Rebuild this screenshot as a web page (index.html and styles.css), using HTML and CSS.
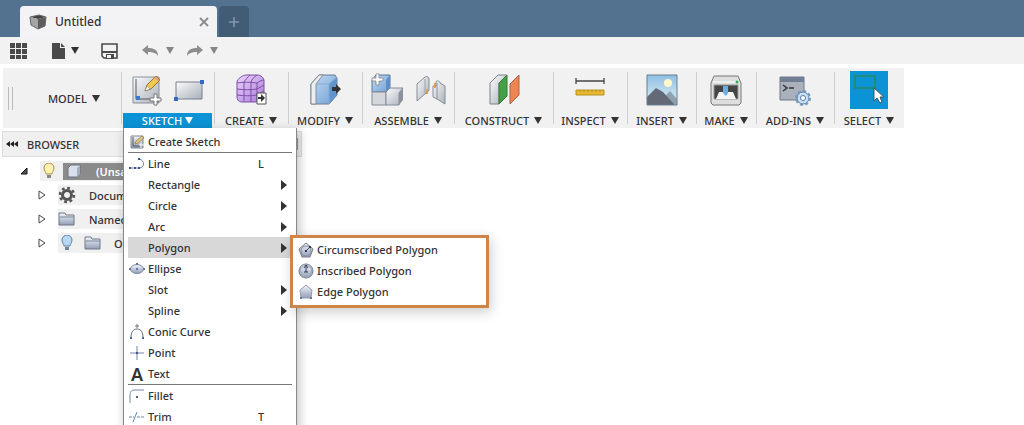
FILE: index.html
```html
<!DOCTYPE html>
<html lang="en">
<head>
  <meta charset="UTF-8" />
  <meta name="viewport" content="width=device-width, initial-scale=1" />
  <title>Untitled</title>
  <link rel="stylesheet" href="styles.css">
</head>
<body>
  <!-- shared gradients -->
  <svg class="defs" width="0" height="0" aria-hidden="true">
    <defs>
      <linearGradient id="silver" x1="0" y1="0" x2="1" y2="1"><stop offset="0" stop-color="#fafbfc"/><stop offset="1" stop-color="#a9b0ba"/></linearGradient>
      <linearGradient id="steel" x1="0" y1="0" x2="0" y2="1"><stop offset="0" stop-color="#f3f6fb"/><stop offset="1" stop-color="#929eb7"/></linearGradient>
      <linearGradient id="blue" x1="0" y1="0" x2="1" y2="1"><stop offset="0" stop-color="#c3dcf5"/><stop offset="1" stop-color="#6f9fd4"/></linearGradient>
      <linearGradient id="violet" x1="0" y1="0" x2="1" y2="1"><stop offset="0" stop-color="#ecd6fd"/><stop offset="1" stop-color="#a878d8"/></linearGradient>
      <linearGradient id="sky" x1="0" y1="0" x2="0" y2="1"><stop offset="0" stop-color="#8fc0e3"/><stop offset="1" stop-color="#e3f1f5"/></linearGradient>
    </defs>
  </svg>

  <div class="app">
    <header class="tabs">
      <div class="tab">
        <svg width="18" height="16" viewBox="0 0 18 16"><path d="M1 3l9-2 7 2-8 2z" fill="#444"/><path d="M1 3l8 2v10l-7-4z" fill="#a5a5a5"/><path d="M9 5l8-2-1 9-7 3z" fill="#5c5c5c"/><path d="M1 3l9-2 7 2-1 9-7 3-7-4z" fill="none" stroke="#666"/></svg>
        <span class="tab-title">Untitled</span>
        <button class="tab-close" aria-label="Close"><svg width="10" height="10" viewBox="0 0 10 10"><path d="M1 1l8 8M9 1L1 9" stroke="#8b8b8b" stroke-width="1.8"/></svg></button>
      </div>
      <button class="tab-new" aria-label="New tab"><svg width="12" height="12" viewBox="0 0 12 12"><path d="M6 1v10M1 6h10" stroke="#8496a8" stroke-width="1.6"/></svg></button>
    </header>

    <nav class="quickbar">
      <button class="quick-grid" aria-label="Data panel"><svg width="18" height="18" viewBox="0 0 18 18" fill="#4a4a4a"><path d="M0 1h5v5H0zM6 1h5v5H6zM12 1h5v5h-5zM0 7h5v5H0zM6 7h5v5H6zM12 7h5v5h-5zM0 13h5v4H0zM6 13h5v4H6zM12 13h5v4h-5z"/></svg></button>
      <button class="quick-file" aria-label="File"><svg width="14" height="16" viewBox="0 0 14 16"><path d="M0 0h8v5h5v11H0z" fill="#4a4a4a"/><path d="M9 0l4 4H9z" fill="#4a4a4a"/></svg><i class="arrow"></i></button>
      <button class="quick-save" aria-label="Save"><svg width="17" height="16" viewBox="0 0 17 16"><path d="M1 1h15v14H3l-2-2z" fill="#f2f2f2" stroke="#4a4a4a" stroke-width="1.6"/><path d="M1 8h15v2H1zM5 11h8v5H5z" fill="#4a4a4a"/><path d="M6 12h4v3H6z" fill="#f2f2f2"/></svg></button>
      <button class="quick-undo" aria-label="Undo"><svg width="17" height="12" viewBox="0 0 17 12"><path d="M0 5l6-5v3c6 0 10 2 10 8-2-3-5-4-10-4v3z" fill="#8d8d8d"/></svg><i class="arrow dim"></i></button>
      <button class="quick-redo" aria-label="Redo"><svg width="17" height="12" viewBox="0 0 17 12"><path d="M17 5l-6-5v3C5 3 1 5 1 11c2-3 5-4 10-4v3z" fill="#8d8d8d"/></svg><i class="arrow dim"></i></button>
    </nav>

    <div class="toolbar">
      <div class="workspace">
        <span class="grip"></span>
        <button>MODEL<i class="arrow"></i></button>
      </div>

      <div class="group sketch">
        <div class="icons">
          <svg width="32" height="32" viewBox="0 0 32 32"><path d="M3 3h26v26H3z" fill="url(#silver)" stroke="#888f99"/><path d="M6 5v20h21" fill="none" stroke="#555" /><path d="M6 22h4v4H6z" fill="#3b78c8"/><path d="M15 17l2-6 9-9 4 4-9 9z" fill="#f1c84c" stroke="#987228"/><path d="M15 17l2-5 3 3z" fill="#fff" stroke="#777" stroke-width=".5"/><path d="M25 3l4 4" stroke="#e49a86" stroke-width="2"/><path d="M24 20h3v4h4v3h-4v4h-3v-4h-4v-3h4z" fill="#fff" stroke="#777"/></svg>
          <svg width="32" height="26" viewBox="0 0 32 26"><path d="M3 5h26v17H3z" fill="url(#silver)" stroke="#777f8d"/><path d="M27 3h4v4h-4zM1 20h4v4H1z" fill="#3469bd"/></svg>
        </div>
        <button class="label open" aria-expanded="true">SKETCH<i class="arrow"></i></button>

        <ul class="menu">
          <li><button><span class="mi"><svg width="15" height="14" viewBox="0 0 15 14"><path d="M1 1h12v12H1z" fill="url(#steel)" stroke="#7e8697"/><path d="M3 2v9h9" fill="none" stroke="#555"/><path d="M5 9l1-3 6-5 2 2-6 5z" fill="#e2c680" stroke="#8c7a51" stroke-width=".7"/><path d="M11 8v5M9 10h5" stroke="#fff"/></svg></span>Create Sketch</button></li>
          <li class="sep"></li>
          <li><button><span class="mi"><svg width="16" height="14" viewBox="0 0 16 14"><path d="M1 11h9c6 0 6-8 0-9" fill="none" stroke="#6c80aa"/><path d="M0 10h2v2H0zM5 10h2v2H5zM9 10h2v2H9zM9 1h2v2H9z" fill="#3f5791"/></svg></span>Line<kbd>L</kbd></button></li>
          <li><button><span class="mi"></span>Rectangle<i class="sub"></i></button></li>
          <li><button><span class="mi"></span>Circle<i class="sub"></i></button></li>
          <li><button><span class="mi"></span>Arc<i class="sub"></i></button></li>
          <li class="has-sub">
            <button class="active" aria-expanded="true"><span class="mi"></span>Polygon<i class="sub"></i></button>
            <ul class="submenu">
              <li><button><span class="mi"><svg width="16" height="16" viewBox="0 0 16 16"><path d="M8 1l7 6-3 8H4L1 7z" fill="url(#steel)" stroke="#777b88"/><circle cx="8" cy="9" r="5" fill="none" stroke="#868c9b"/><path d="M8 9l3-3" stroke="#555"/><path d="M7 8h2v2H7zM11 4h2v2h-2z" fill="#333c55"/></svg></span>Circumscribed Polygon</button></li>
              <li><button><span class="mi"><svg width="16" height="16" viewBox="0 0 16 16"><circle cx="8" cy="8" r="7" fill="url(#steel)" stroke="#6e7484"/><path d="M8 1l6 5-2 8H4L2 6z" fill="none" stroke="#9ba2b3"/><path d="M8 2v7M6 9h4M8 2L6 5M8 2l2 3" stroke="#333c55" fill="none"/></svg></span>Inscribed Polygon</button></li>
              <li><button><span class="mi"><svg width="16" height="16" viewBox="0 0 16 16"><path d="M8 1l6 5-1 8H3L2 6z" fill="url(#steel)" stroke="#989ca8"/><path d="M2 13h2v2H2zM12 13h2v2h-2z" fill="#6274a3"/></svg></span>Edge Polygon</button></li>
            </ul>
          </li>
          <li><button><span class="mi"><svg width="16" height="12" viewBox="0 0 16 12"><ellipse cx="8" cy="6" rx="6.5" ry="4.5" fill="url(#steel)" stroke="#7d8aa6"/><path d="M7 5h2v2H7zM0 5h2v2H0zM14 5h2v2h-2zM7 0h2v2H7z" fill="#6478a2"/></svg></span>Ellipse</button></li>
          <li><button><span class="mi"></span>Slot<i class="sub"></i></button></li>
          <li><button><span class="mi"></span>Spline<i class="sub"></i></button></li>
          <li><button><span class="mi"><svg width="16" height="16" viewBox="0 0 16 16"><path d="M2 14C2 8 4 5 8 5s6 3 6 9" fill="none" stroke="#666e7c"/><path d="M8 0v4M6 2h4" stroke="#777"/><path d="M1 13h2v2H1zM13 13h2v2h-2z" fill="#4867a3"/></svg></span>Conic Curve</button></li>
          <li><button><span class="mi"><svg width="16" height="16" viewBox="0 0 16 16"><path d="M8 1v14M1 8h14" stroke="#7184a8"/><path d="M7 7h2v2H7z" fill="#3f5685"/></svg></span>Point</button></li>
          <li><button><span class="mi letter">A</span>Text</button></li>
          <li class="sep"></li>
          <li><button><span class="mi"><svg width="16" height="16" viewBox="0 0 16 16"><path d="M1 15V7c0-4 2-5 5-5h9" fill="none" stroke="#7186a9"/><path d="M7 8h2v2H7z" fill="#52658b"/></svg></span>Fillet</button></li>
          <li><button><span class="mi"><svg width="16" height="14" viewBox="0 0 16 14"><path d="M0 7h5M8 7h8" stroke="#71869f" stroke-dasharray="3 1"/><path d="M4 12L8 2" stroke="#5d86bb"/></svg></span>Trim<kbd>T</kbd></button></li>
        </ul>
      </div>

      <div class="group create">
        <div class="icons"><svg width="32" height="34" viewBox="0 0 32 34"><path d="M2 9c0-3 6-7 9-7h11c4 0 7 3 7 6v13c0 4-5 8-9 8H7c-4 0-5-3-5-6z" fill="url(#violet)" stroke="#7c4ca6"/><path d="M2 10c6-1 13-1 20 0 3-2 5-3 7-3M9 9v19M16 9v20M22 10v18M2 16c7 1 14 1 20 0l7-4M2 22c7 1 14 1 20 0l7-4M9 9c2-3 4-5 6-7M16 9c1-3 3-5 6-7" fill="none" stroke="#7d4ea8"/><path d="M22 20h9v11h-9z" fill="#fff" stroke="#555"/><path d="M23 24h3v-3l4 4-4 4v-3h-3z" fill="#333"/></svg></div>
        <button class="label">CREATE<i class="arrow"></i></button>
      </div>
      <div class="group modify">
        <div class="icons"><svg width="32" height="34" viewBox="0 0 32 34"><path d="M2 11l8-9h16l2 3v17l-8 9H2z" fill="url(#blue)" stroke="#687b91"/><path d="M2 11l8-9h4L7 11v20H2z" fill="#eceff2" stroke="#848b93"/><path d="M20 11l8-7v18l-8 9z" fill="#5f94cf"/><path d="M7 11h13v20M20 11l8-7" fill="none" stroke="#8baacc"/><path d="M23 14h4v-3l5 5-5 5v-3h-4z" fill="#333"/></svg></div>
        <button class="label">MODIFY<i class="arrow"></i></button>
      </div>
      <div class="group assemble">
        <div class="icons">
          <svg width="34" height="34" viewBox="0 0 34 34"><path d="M2 7l4-5h14v13l-4 4H2z" fill="url(#blue)" stroke="#59779b"/><path d="M16 7l4-5v13l-4 4z" fill="#5d8ec6"/><path d="M2 19h14v13H2z" fill="#d4d7dc" stroke="#858b94"/><path d="M16 19l4-4h13l-4 5v12H16z" fill="url(#silver)" stroke="#858b94"/><path d="M29 20l4-5v12l-4 5z" fill="#8c929b"/><path d="M6 1h3v4h4v3H9v4H6V8H2V5h4z" fill="#fff" stroke="#777" stroke-width=".7"/></svg>
          <svg width="32" height="30" viewBox="0 0 32 30"><path d="M2 9l8-7c2-1 4 0 4 2v11l-3 4v-1L2 26z" fill="url(#silver)" stroke="#858d96"/><path d="M10 4v14" stroke="#9ba2aa"/><path d="M18 11h3V7c1-2 4-1 4 1l5 3v18l-8-5-4-2z" fill="url(#silver)" stroke="#858d96"/><path d="M22 8v16" stroke="#8b929b"/><path d="M12 14v5M20 8v5" stroke="#e78b36" stroke-width="1.4"/></svg>
        </div>
        <button class="label">ASSEMBLE<i class="arrow"></i></button>
      </div>
      <div class="group construct">
        <div class="icons"><svg width="34" height="34" viewBox="0 0 34 34"><path d="M3 10l8-8h9l-8 8v21H3z" fill="url(#silver)" stroke="#7b8289"/><path d="M12 10l8-8v21l-8 8z" fill="#43a047" stroke="#377a3b"/><path d="M23 11l9-9v20l-9 9z" fill="#ef8450" stroke="#a76242"/></svg></div>
        <button class="label">CONSTRUCT<i class="arrow"></i></button>
      </div>
      <div class="group inspect">
        <div class="icons"><svg width="32" height="28" viewBox="0 0 32 28"><path d="M2 5h28M2 2v6M30 2v6" stroke="#444" stroke-width="1.3"/><path d="M2 14h28v5H2z" fill="#e7b931" stroke="#b98f25"/><path d="M6 14v2M10 14v2M14 14v2M18 14v2M22 14v2M26 14v2" stroke="#b98f25"/></svg></div>
        <button class="label">INSPECT<i class="arrow"></i></button>
      </div>
      <div class="group insert">
        <div class="icons"><svg width="32" height="32" viewBox="0 0 32 32"><path d="M1 1h30v30H1z" fill="url(#sky)"/><circle cx="22" cy="9" r="4" fill="#fff8c9"/><path d="M12 29l12-12 7 8v6H12z" fill="#8fa0b0"/><path d="M1 23l9-9 7 4 11 12v1H1z" fill="#646978"/><path d="M1 1h30v30H1z" fill="none" stroke="#697e8d"/></svg></div>
        <button class="label">INSERT<i class="arrow"></i></button>
      </div>
      <div class="group make">
        <div class="icons"><svg width="32" height="32" viewBox="0 0 32 32"><path d="M4 2h24l3 7v20l-2 2H3l-2-2V9z" fill="#dedede" stroke="#777"/><path d="M3 8h26" stroke="#fff"/><path d="M4 11h24v14H4z" fill="#454545" stroke="#999"/><path d="M9 18h14l3 7H6z" fill="#f2f4f5"/><path d="M13 12h5v7l-2 3-3-3z" fill="#6cacdf"/><circle cx="27" cy="8" r="1.5" fill="#34a853"/></svg></div>
        <button class="label">MAKE<i class="arrow"></i></button>
      </div>
      <div class="group addins">
        <div class="icons"><svg width="32" height="32" viewBox="0 0 32 32"><path d="M1 3h24v23H1z" fill="#aab0bc" stroke="#6f7888"/><path d="M1 3h24v5H1z" fill="#717d93"/><path d="M4 11l4 3-4 3M10 14h5" fill="none" stroke="#333" stroke-width="1.5"/><circle cx="24" cy="24" r="6" fill="#c9ddf0" stroke="#597da6"/><circle cx="24" cy="24" r="7" fill="none" stroke="#7599bf" stroke-width="2" stroke-dasharray="3 2.5"/><circle cx="24" cy="24" r="2.5" fill="#fff" stroke="#597da6"/></svg></div>
        <button class="label">ADD-INS<i class="arrow"></i></button>
      </div>
      <div class="group select">
        <div class="icons"><svg width="38" height="38" viewBox="0 0 38 38"><path d="M0 0h38v38H0z" fill="#0b93d5"/><path d="M5 5h20v12H5z" fill="none" stroke="#258b62" stroke-width="1.6"/><path d="M24 17v13l3-3 3 5 2-1-2-5h4z" fill="#fff" stroke="#3c5263"/></svg></div>
        <button class="label">SELECT<i class="arrow"></i></button>
      </div>
    </div>

    <aside class="browser">
      <h2><svg width="12" height="6" viewBox="0 0 12 6"><path d="M0 3l4-3v6zM4 3l4-3v6zM8 3l4-3v6z" fill="#222"/></svg>BROWSER<span class="browser-grip"></span></h2>
      <div class="node root">
        <svg class="twist" width="8" height="8" viewBox="0 0 8 8"><path d="M7 1v6H1z" fill="#555" stroke="#111"/></svg>
        <div class="node-body">
          <svg width="18" height="16" viewBox="0 0 18 16"><path d="M6 11c0-2-2-3-2-6a5 5 0 0 1 10 0c0 3-2 4-2 6z" fill="#fff1ae" stroke="#a88f50"/><path d="M7 12h4v3H7z" fill="#888"/></svg>
          <div class="root-name"><svg width="16" height="16" viewBox="0 0 16 16"><path d="M2 5l3-3h9v9l-3 3H2z" fill="#d9e0eb" stroke="#6c7480"/><path d="M11 5l3-3v9l-3 3z" fill="#a5afbf"/></svg>(Unsa</div>
        </div>
      </div>
      <div class="node">
        <svg class="twist" width="8" height="10" viewBox="0 0 8 10"><path d="M1 1l6 4-6 4z" fill="#fff" stroke="#444"/></svg>
        <div class="node-body"><svg width="18" height="18" viewBox="0 0 18 18"><circle cx="9" cy="9" r="4.5" fill="none" stroke="#555" stroke-width="3"/><circle cx="9" cy="9" r="7" fill="none" stroke="#555" stroke-width="2.5" stroke-dasharray="2.8 2.7"/></svg><span>Docum</span></div>
      </div>
      <div class="node">
        <svg class="twist" width="8" height="10" viewBox="0 0 8 10"><path d="M1 1l6 4-6 4z" fill="#fff" stroke="#444"/></svg>
        <div class="node-body"><svg width="18" height="16" viewBox="0 0 18 16"><path d="M1 14V2h6l1 2h8v10z" fill="url(#steel)" stroke="#6e7785"/><path d="M2 6h14" stroke="#7b8799"/></svg><span>Named</span></div>
      </div>
      <div class="node">
        <svg class="twist" width="8" height="10" viewBox="0 0 8 10"><path d="M1 1l6 4-6 4z" fill="#fff" stroke="#444"/></svg>
        <div class="node-body origin"><svg width="18" height="16" viewBox="0 0 18 16"><path d="M6 11c0-2-2-3-2-6a5 5 0 0 1 10 0c0 3-2 4-2 6z" fill="#b7d9f3" stroke="#61809f"/><path d="M7 12h4v3H7z" fill="#71869b"/></svg><svg width="18" height="16" viewBox="0 0 18 16"><path d="M1 14V2h6l1 2h8v10z" fill="url(#steel)" stroke="#6e7785"/><path d="M2 6h14" stroke="#7b8799"/></svg><span>O</span></div>
      </div>
    </aside>
  </div>
</body>
</html>
```
FILE: styles.css
```css
* {
  box-sizing: border-box;
}

body {
  margin: 0;
  background: #fff;
  color: #333;
  font-family: "Noto Sans", sans-serif;
  font-size: 11px;
  font-weight: 500;
}

button {
  display: flex;
  align-items: center;
  padding: 0;
  border: none;
  background: none;
  color: inherit;
  font: inherit;
  cursor: pointer;
}

ul {
  margin: 0;
  padding: 0;
  list-style: none;
}

svg {
  display: block;
  flex: none;
}

.defs {
  position: absolute;
}

.app {
  height: 100vh;
  overflow: hidden;
}

.arrow {
  flex: none;
  margin-left: 5px;
  border: 4px solid transparent;
  border-top: 7px solid #333;
  border-bottom: 0;
}

.arrow.dim {
  border-top-color: #858585;
}

/* document tabs */
.tabs {
  display: flex;
  align-items: flex-end;
  gap: 2px;
  height: 37px;
  padding-left: 20px;
  background: #53728f;
}

.tab {
  display: flex;
  align-items: center;
  width: 197px;
  height: 31px;
  padding: 0 8px 0 9px;
  border-radius: 4px 4px 0 0;
  background: #f3f3f5;
}

.tab-title {
  flex: 1;
  margin-left: 8px;
  font-size: 12px;
}

.tab-new {
  justify-content: center;
  width: 30px;
  height: 31px;
  border-radius: 4px 4px 0 0;
  background: #435c75;
}

/* quick access bar */
.quickbar {
  display: flex;
  align-items: center;
  height: 27px;
  padding-left: 10px;
  background: #f2f2f2;
}

.quick-file {
  margin-left: 24px;
}

.quick-save {
  margin-left: 22px;
}

.quick-undo {
  margin-left: 24px;
}

.quick-redo {
  margin-left: 12px;
}

.quick-undo .arrow,
.quick-redo .arrow {
  margin-left: 7px;
}

/* ribbon */
.toolbar {
  display: flex;
  width: fit-content;
  height: 60px;
  margin: 4px 0 0 3px;
  background: #f1f1f1;
}

.workspace {
  display: flex;
  align-items: center;
  width: 118px;
}

.grip {
  width: 5px;
  height: 23px;
  margin: 0 35px 0 5px;
  border: 1px solid #bbb;
  border-width: 0 1px;
}

.group {
  position: relative;
  display: flex;
  flex-direction: column;
  align-items: center;
  padding-top: 2px;
}

.group::before {
  content: "";
  position: absolute;
  top: 4px;
  bottom: 4px;
  left: 0;
  width: 1px;
  background: #cfcfcf;
}

.icons {
  display: flex;
  flex: 1;
  align-items: center;
  gap: 11px;
  padding-bottom: 4px;
}

.label {
  height: 15px;
  white-space: nowrap;
}

.label .arrow {
  margin-left: 5px;
}

.label.open {
  justify-content: center;
  align-self: stretch;
  margin: 0 2px;
  background: #0b93d5;
  color: #fff;
}

.label.open .arrow {
  margin-left: 3px;
  border-top-color: #fff;
}

.sketch { width: 93px; }
.create { width: 74px; }
.modify { width: 74px; }
.assemble { width: 92px; }
.construct { width: 99px; }
.inspect { width: 74px; }
.insert { width: 69px; }
.make { width: 60px; }
.addins { width: 78px; }
.select { width: 70px; }

.select .icons {
  padding-bottom: 3px;
}

/* drop-down menu */
.menu {
  position: absolute;
  z-index: 10;
  top: 100%;
  left: 2px;
  width: 174px;
  padding: 3px 4px;
  border: 1px solid #888;
  border-top-width: 0;
  background: #fff;
  box-shadow: 2px 3px 10px rgba(0, 0, 0, 0.25);
}

.menu button {
  width: 100%;
  height: 21px;
}

.menu button.active {
  background: #d8d8d8;
}

.menu .sep {
  height: 1px;
  background: #777;
}

.mi {
  display: flex;
  justify-content: center;
  width: 16px;
  margin: 0 3px 0 1px;
}

.mi.letter {
  font-size: 18px;
  font-weight: 600;
}

.menu kbd {
  width: 8px;
  margin: 0 27px 0 auto;
  font: inherit;
}

.sub {
  margin: 0 5px 0 auto;
  border: 5px solid transparent;
  border-left: 6px solid #333;
  border-right: 0;
}

.has-sub {
  position: relative;
}

.submenu {
  position: absolute;
  top: -2px;
  left: 162px;
  width: 199px;
  padding: 1px 4px 3px;
  border: 3px solid #cf8545;
  background: #fff;
  box-shadow: 2px 4px 12px rgba(0, 0, 0, 0.2);
}

/* browser tree */
.browser {
  width: 300px;
  margin: 3px 0 0 2px;
}

.browser h2 {
  display: flex;
  align-items: center;
  gap: 9px;
  height: 26px;
  margin: 0 0 2px;
  padding: 0 3px 0 3px;
  border: 1px solid #ddd;
  background: #f0f0f0;
  font-size: 11px;
  font-weight: 500;
}

.browser-grip {
  width: 3px;
  height: 12px;
  margin-left: auto;
  border: 1px solid #999;
  border-width: 0 1px;
}

.node {
  display: flex;
  align-items: center;
  height: 24px;
  margin-right: 8px;
  padding-left: 36px;
}

.node.root {
  padding-left: 18px;
}

.node-body {
  display: flex;
  flex: 1;
  align-items: center;
  gap: 13px;
  height: 20px;
  margin-left: 12px;
  background: #f0f0f0;
}

.root .node-body {
  gap: 5px;
}

.root-name {
  display: flex;
  flex: 1;
  align-items: center;
  gap: 14px;
  height: 17px;
  padding-left: 3px;
  background: #8b8b8b;
  color: #fff;
  font-weight: 600;
}

.node-body.origin {
  gap: 8px;
}

.origin span {
  margin-left: 4px;
}
```
